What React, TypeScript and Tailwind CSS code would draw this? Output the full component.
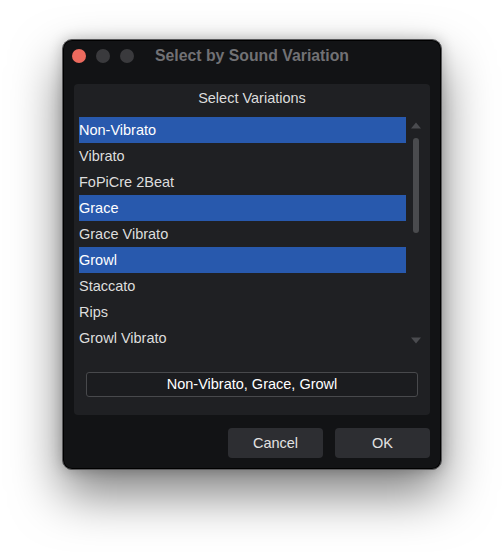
import React from 'react';

const items = [
  { name: 'Non-Vibrato', selected: true },
  { name: 'Vibrato', selected: false },
  { name: 'FoPiCre 2Beat', selected: false },
  { name: 'Grace', selected: true },
  { name: 'Grace Vibrato', selected: false },
  { name: 'Growl', selected: true },
  { name: 'Staccato', selected: false },
  { name: 'Rips', selected: false },
  { name: 'Growl Vibrato', selected: false },
];

function Arrow({ down = false }: { down?: boolean }) {
  return (
    <svg width="10" height="7" viewBox="0 0 10 7" className="block">
      {down ? (
        <path d="M0 0.5 H10 L5 6.5 Z" fill="#4a4b4f" />
      ) : (
        <path d="M0 6.5 H10 L5 0.5 Z" fill="#4a4b4f" />
      )}
    </svg>
  );
}

export default function App() {
  const selected = items.filter((i) => i.selected).map((i) => i.name).join(', ');

  return (
    <div
      className="w-[504px] h-[552px] bg-white pt-[39px] pl-[62px]"
      style={{ fontFamily: '"Liberation Sans", Arial, sans-serif' }}
    >
      <div className="w-[380px] h-[431px] flex flex-col rounded-[10px] border border-[#5a5a5c] bg-[#121315] shadow-[inset_0_0_0_1px_#000,0_24px_50px_rgba(0,0,0,0.5),0_0_14px_rgba(0,0,0,0.22)]">
        {/* title bar */}
        <div className="h-[30px] grid grid-cols-[1fr_auto_1fr] items-center px-[9px] pt-px">
          <div className="flex items-center gap-[10px]">
            <span className="w-[14px] h-[14px] rounded-full bg-[#ec6a5e]" />
            <span className="w-[14px] h-[14px] rounded-full bg-[#3a3a3d]" />
            <span className="w-[14px] h-[14px] rounded-full bg-[#3a3a3d]" />
          </div>
          <div className="text-[15.8px] font-bold text-[#717174] leading-none pt-px">Select by Sound Variation</div>
          <div />
        </div>

        <div className="flex-1 flex flex-col px-[11px] pt-[14px] pb-[11px]">
          {/* panel */}
          <div className="h-[331px] rounded-[4px] bg-[#1f2023] flex flex-col px-[5px]">
            <div className="h-[28px] pt-[2px] flex items-center justify-center text-[14.5px] text-[#dcdcdc]">
              Select Variations
            </div>
            <div className="mt-[5px] flex">
              <div className="w-[327px] flex flex-col">
                {items.map((it) => (
                  <div
                    key={it.name}
                    className={`h-[26px] pt-[2px] flex items-center text-[14.5px] ${
                      it.selected ? 'bg-[#2859ad] text-white' : 'text-[#dddddd]'
                    }`}
                  >
                    {it.name}
                  </div>
                ))}
              </div>
              <div className="ml-[5px] w-[10px] flex flex-col items-center">
                <div className="mt-[5px]">
                  <Arrow />
                </div>
                <div className="mt-[9px] w-[6px] h-[95px] rounded-full bg-[#4a4b4e]" />
                <div className="flex-1" />
                <div className="mb-[7px]">
                  <Arrow down />
                </div>
              </div>
            </div>
            <div className="mt-[21px] mx-[7px] h-[25px] pt-px rounded-[3px] border border-[#48494c] bg-[#1b1c1f] flex items-center justify-center text-[14.5px] text-white">
              {selected}
            </div>
          </div>

          {/* buttons */}
          <div className="mt-[13px] flex justify-end gap-[12px]">
            <button className="w-[95px] h-[30px] pt-px rounded-[4px] bg-[#2d2e32] text-[14.5px] text-[#e2e2e2]">Cancel</button>
            <button className="w-[95px] h-[30px] pt-px rounded-[4px] bg-[#2d2e32] text-[14.5px] text-[#e2e2e2]">OK</button>
          </div>
        </div>
      </div>
    </div>
  );
}
